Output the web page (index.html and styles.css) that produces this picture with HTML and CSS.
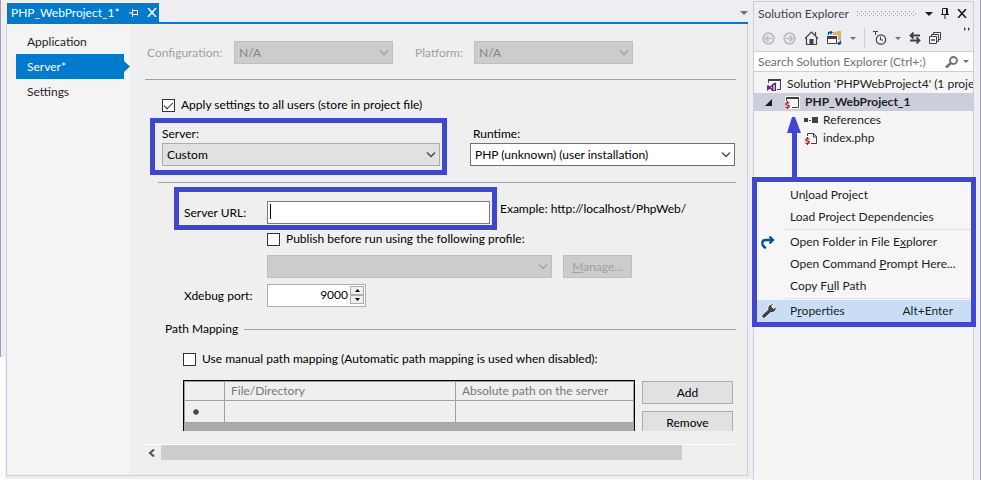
FILE: index.html
```html
<!DOCTYPE html>
<html lang="en">
<head>
<meta charset="utf-8">
<title>PHP_WebProject_1</title>
<link rel="stylesheet" href="styles.css">
</head>
<body>
<svg class="defs" aria-hidden="true">
  <symbol id="chevron" viewBox="0 0 10 6"><path d="M1 .5l4 4 4-4" fill="none" stroke="currentColor" stroke-width="1.300"/></symbol>
  <symbol id="caret" viewBox="0 0 8 4"><path d="M0 0h8L4 4z" fill="currentColor"/></symbol>
  <symbol id="dollar" viewBox="0 0 5 8"><path d="M4.500 2H1v1.800l3 .6V6.200H.3M2.500 0v2M2.500 6v2" fill="none" stroke="#a1000e" stroke-width="1.100"/></symbol>
</svg>
<div class="app">
  <div class="edge"></div>
  <main class="document">
    <header class="tabs">
      <div class="tab">
        <span class="tab-title">PHP_WebProject_1*</span>
        <button class="icon-button" aria-label="Pin tab"><svg width="9" height="8" viewBox="0 0 9 8"><path d="M0 4h3M3.500 0v8M4 1.500h4.500v5M4 5.500h5" fill="none" stroke="currentColor"/></svg></button>
        <button class="icon-button" aria-label="Close tab"><svg width="10" height="9" viewBox="0 0 10 9"><path d="M1 0l8 9M9 0L1 9" fill="none" stroke="currentColor" stroke-width="1.500"/></svg></button>
      </div>
      <button class="icon-button tab-list" aria-label="Open documents"><svg width="8" height="4"><use href="#caret"/></svg></button>
    </header>
    <div class="document-body">
      <nav class="pages">
        <a href="#application">Application</a>
        <a href="#server" class="current">Server*</a>
        <a href="#settings">Settings</a>
      </nav>
      <form class="settings">
        <div class="config-row">
          <label for="configuration">Configuration:</label>
          <span class="select"><select id="configuration" disabled><option>N/A</option></select><svg class="chevron"><use href="#chevron"/></svg></span>
          <label for="platform" class="platform-label">Platform:</label>
          <span class="select"><select id="platform" disabled><option>N/A</option></select><svg class="chevron"><use href="#chevron"/></svg></span>
        </div>
        <hr class="rule first-rule">
        <div class="check all-users"><input type="checkbox" id="all-users" checked><label for="all-users">Apply settings to all users (store in project file)</label></div>
        <div class="server-row">
          <div class="highlight server-field">
            <label for="server">Server:</label>
            <span class="select"><select id="server"><option>Custom</option></select><svg class="chevron"><use href="#chevron"/></svg></span>
          </div>
          <div class="runtime-field">
            <label for="runtime">Runtime:</label>
            <span class="select light"><select id="runtime"><option>PHP (unknown) (user installation)</option></select><svg class="chevron"><use href="#chevron"/></svg></span>
          </div>
        </div>
        <hr class="rule second-rule">
        <div class="url-row">
          <div class="highlight url-field">
            <label for="url">Server URL:</label>
            <span class="text-box"><input type="text" id="url"><span class="text-cursor"></span></span>
          </div>
          <span>Example: http://localhost/PhpWeb/</span>
        </div>
        <div class="check publish"><input type="checkbox" id="publish"><label for="publish">Publish before run using the following profile:</label></div>
        <div class="profile-row">
          <span class="select"><select id="profile" aria-label="Publish profile" disabled></select><svg class="chevron"><use href="#chevron"/></svg></span>
          <button type="button" class="button manage" disabled><u>M</u>anage...</button>
        </div>
        <div class="port-row">
          <label for="port">Xdebug port:</label>
          <span class="spinner">
            <input type="number" id="port" value="9000">
            <span class="steps">
              <button type="button" aria-label="Increase"><svg width="5" height="3" viewBox="0 0 5 3"><path d="M0 3h5L2.500 0z"/></svg></button>
              <button type="button" aria-label="Decrease"><svg width="5" height="3" viewBox="0 0 5 3"><path d="M0 0h5L2.500 3z"/></svg></button>
            </span>
          </span>
        </div>
        <h2 class="group-title">Path Mapping</h2>
        <div class="check manual"><input type="checkbox" id="manual"><label for="manual">Use manual path mapping (Automatic path mapping is used when disabled):</label></div>
        <div class="mapping">
          <div class="grid">
            <table>
              <thead><tr><th class="marker"></th><th>File/Directory</th><th class="server-path">Absolute path on the server</th></tr></thead>
              <tbody><tr><td class="marker"><svg width="6" height="6" viewBox="0 0 6 6"><path d="M3 0v6M0 3h6M1 1l4 4M5 1L1 5" stroke="#444" stroke-width="1.300"/></svg></td><td></td><td></td></tr></tbody>
            </table>
          </div>
          <div class="mapping-actions">
            <button type="button" class="button">Add</button>
            <button type="button" class="button">Remove</button>
          </div>
        </div>
        <div class="scrollbar">
          <button type="button" class="icon-button" aria-label="Scroll left"><svg width="7" height="8" viewBox="0 0 7 8"><path d="M6 .5L2 4l4 3.500" fill="none" stroke="#505050" stroke-width="2"/></svg></button>
          <div class="track"><div class="thumb"></div></div>
        </div>
      </form>
    </div>
  </main>
  <aside class="explorer">
    <header class="panel-title">
      <h1>Solution Explorer</h1>
      <svg class="grip" height="5"><defs><pattern id="dots" width="4" height="4" patternUnits="userSpaceOnUse"><path d="M0 0h1v1H0zM2 2h1v1H2z" fill="#999ba8"/></pattern></defs><rect width="100%" height="5" fill="url(#dots)"/></svg>
      <button class="icon-button" aria-label="Window position"><svg width="8" height="4"><use href="#caret"/></svg></button>
      <button class="icon-button" aria-label="Auto hide"><svg width="8" height="11" viewBox="0 0 8 11"><path d="M1.500 6V.5h5V6M5.500 1v5M0 6.500h8M4 7v4" fill="none" stroke="currentColor"/></svg></button>
      <button class="icon-button" aria-label="Close"><svg width="10" height="9" viewBox="0 0 10 9"><path d="M1 0l8 9M9 0L1 9" fill="none" stroke="currentColor" stroke-width="1.600"/></svg></button>
    </header>
    <div class="toolbar">
      <button class="icon-button faded" aria-label="Back"><svg width="13" height="13" viewBox="0 0 13 13"><circle cx="6.500" cy="6.500" r="5.300" fill="none" stroke="currentColor" stroke-width="1.800"/><path d="M10 6.500H4M6.500 3.500l-3 3 3 3" fill="none" stroke="currentColor" stroke-width="1.600"/></svg></button>
      <button class="icon-button faded" aria-label="Forward"><svg width="13" height="13" viewBox="0 0 13 13"><circle cx="6.500" cy="6.500" r="5.300" fill="none" stroke="currentColor" stroke-width="1.800"/><path d="M3 6.500h6M6.500 3.500l3 3-3 3" fill="none" stroke="currentColor" stroke-width="1.600"/></svg></button>
      <button class="icon-button" aria-label="Home"><svg width="15" height="14" viewBox="0 0 15 14"><path d="M1 7.500L7.500 1 14 7.500M2.500 7v6.500h10V7M11.500 1v4" fill="none" stroke="currentColor" stroke-width="1.200"/><path d="M5.500 8h4v5.500h-4z" fill="currentColor"/></svg></button>
      <button class="icon-button" aria-label="Sync views"><svg width="15" height="14" viewBox="0 0 15 14"><path d="M6 1h3l1-1h4v9h-3V4H6z" fill="#dcb067"/><path d="M.5 5.500h9v7h-9z" fill="#f6f6f6" stroke="#424242"/><path d="M0 5h10v3H0z" fill="#424242"/><path d="M1.500 4V1.500H5M3.500 0L5 1.500 3.500 3M13.500 9.500v3H11M12.500 11L11 12.500l1.500 1.500" fill="none" stroke="#00539c" stroke-width="1.300"/></svg></button>
      <button class="icon-button" aria-label="Sync options"><svg class="small-caret"><use href="#caret"/></svg></button>
      <span class="divider"></span>
      <button class="icon-button" aria-label="Pending changes filter"><svg width="14" height="14" viewBox="0 0 14 14"><path d="M0 .5h5M2.500 0v4" stroke="currentColor" fill="none"/><circle cx="8" cy="8.500" r="4.700" fill="none" stroke="currentColor" stroke-width="1.200"/><path d="M7.500 5.500V9H10" stroke="currentColor" fill="none"/></svg></button>
      <button class="icon-button" aria-label="Filter options"><svg class="small-caret"><use href="#caret"/></svg></button>
      <button class="icon-button" aria-label="Refresh"><svg width="12" height="12" viewBox="0 0 12 12"><path d="M11 3.500H2M4.500.5l-3 3 3 3M1 8.500h9M7.500 5.500l3 3-3 3" fill="none" stroke="currentColor" stroke-width="1.800"/></svg></button>
      <button class="icon-button" aria-label="Collapse all"><svg width="12" height="12" viewBox="0 0 12 12"><path d="M4.500 2V.5h7v7H10M2.500 4V2.500h7v7H8" fill="none" stroke="currentColor"/><path d="M.5 4.500h7v7h-7z" fill="#f6f6f6" stroke="currentColor"/><path d="M2 8h4" stroke="#00539c" stroke-width="1.500"/></svg></button>
      <button class="icon-button overflow" aria-label="More tools"><svg width="6" height="4" viewBox="0 0 6 4"><path d="M0 0l2 2-2 2zM4 0l2 2-2 2z" fill="currentColor"/></svg></button>
    </div>
    <div class="search">
      <input type="search" aria-label="Search Solution Explorer" placeholder="Search Solution Explorer (Ctrl+;)">
      <button class="icon-button" aria-label="Search"><svg width="13" height="12" viewBox="0 0 13 12"><circle cx="8.500" cy="4.500" r="3.500" fill="none" stroke="currentColor" stroke-width="1.800"/><path d="M6 7l-5 4.500" stroke="currentColor" stroke-width="2.500"/></svg></button>
      <button class="icon-button" aria-label="Search options"><svg class="small-caret"><use href="#caret"/></svg></button>
    </div>
    <ul class="tree">
      <li class="solution"><svg width="15" height="13" viewBox="0 0 15 13"><path d="M1.500 5V1.500h12v10H10" fill="none" stroke="#424242"/><path d="M1 1h13v2H1z" fill="#424242"/><path d="M.7 7.500v4l5-4.500v5.500l-5-5M5.700 6.500L8.300 5.500v8L5.700 12.500" fill="none" stroke="#68217a" stroke-width="1.400"/></svg>Solution 'PHPWebProject4' (1 project)</li>
      <li class="project"><svg class="expander" width="7" height="7" viewBox="0 0 7 7"><path d="M7 0v7H0z" fill="#1e1e1e"/></svg><svg width="15" height="13" viewBox="0 0 15 13"><path d="M0 0h15v13H0z" fill="#f6f6f6"/><path d="M1.500 5V1.500h12v10H7" fill="none" stroke="#424242"/><path d="M1 1h13v2H1z" fill="#424242"/><use href="#dollar" x="0" y="5" width="5" height="8"/></svg>PHP_WebProject_1</li>
      <li class="item"><svg width="14" height="13" viewBox="0 0 14 13"><path d="M0 4h4v4H0zM5 6h2v1H5zM8 3h6v6H8z" fill="#424242"/></svg>References</li>
      <li class="item"><svg width="14" height="13" viewBox="0 0 14 13"><path d="M3.500 4V1.500h6l3 3v7H7M9.500 1v4H13" fill="none" stroke="#424242"/><use href="#dollar" x="1" y="5" width="5" height="8"/></svg>index.php</li>
    </ul>
    <div class="callout">
      <svg class="pointer" width="14" height="62" viewBox="0 0 14 62"><path d="M5 62V17H0L5 1h3l6 16h-4v45z" fill="#3f48cc"/></svg>
      <div class="context-menu" role="menu">
        <button role="menuitem"><span class="menu-icon"></span>Un<u>l</u>oad Project</button>
        <button role="menuitem"><span class="menu-icon"></span>Load Project Dependencies</button>
        <hr>
        <button role="menuitem"><span class="menu-icon"><svg width="14" height="13" viewBox="0 0 14 13"><path d="M5 12C0 10 0 4 5 4h7M8.500 .5L12 4 8.500 7.500" fill="none" stroke="#00539c" stroke-width="2.300"/></svg></span>Open Folder in File E<u>x</u>plorer</button>
        <button role="menuitem"><span class="menu-icon"></span>Open Command <u>P</u>rompt Here...</button>
        <button role="menuitem"><span class="menu-icon"></span>Copy F<u>u</u>ll Path</button>
        <hr>
        <button role="menuitem" class="selected"><span class="menu-icon"><svg width="16" height="16" viewBox="0 0 16 16"><path d="M1 12l6-5.500C6 3 9 .3 12.800 1L10.500 3.500l2 2 2.700-2C16 7 13 10.500 9.500 9.500l-5.500 5.500c-2 1-4-1-3-3z" fill="#424242" stroke="#f6f6f6"/></svg></span>P<u>r</u>operties<kbd>Alt+Enter</kbd></button>
      </div>
    </div>
  </aside>
</div>
</body>
</html>
```
FILE: styles.css
```css
:root {
  --chrome: #eeeef2;
  --line: #cccedb;
  --accent: #007acc;
  --frame: #9b9fb9;
  --highlight: #3f48cc;
  --rule: #a0a0a0;
}

* { box-sizing: border-box; }

body {
  margin: 0;
  background: #fff;
  color: #000;
  font: 12px/18px Lato, "Open Sans", sans-serif;
}

button, input, select { font: inherit; color: inherit; margin: 0; border-radius: 0; }
ul { list-style: none; margin: 0; padding: 0; }
hr { border: 0; margin: 0; }
h1, h2 { margin: 0; font: inherit; }
a { color: inherit; text-decoration: none; }
svg { flex: none; display: block; }
.defs { position: absolute; width: 0; height: 0; }

.icon-button {
  flex: none;
  display: flex;
  padding: 0;
  border: 0;
  background: none;
}

.app { display: flex; min-height: 100vh; overflow: hidden; }

.edge {
  flex: none;
  width: 5px;
  height: 357px;
  border-left: 1px solid var(--frame);
  background: var(--chrome);
}

/* Document window */
.document {
  flex: 1;
  min-width: 0;
  display: flex;
  flex-direction: column;
  padding: 3px 5px 3px 1px;
  margin-bottom: 1px;
  background: var(--chrome);
}

.tabs {
  display: flex;
  align-items: center;
  justify-content: space-between;
  margin-left: 1px;
  border-bottom: 2px solid var(--accent);
}

.tab {
  display: flex;
  align-items: center;
  gap: 9px;
  width: 152px;
  height: 19px;
  padding: 0 5px 0 4px;
  background: var(--accent);
  color: #fff;
}
.tab-title { flex: 1; white-space: nowrap; }
.tab-list { color: #717171; }

.document-body {
  flex: 1;
  display: flex;
  border: 1px solid var(--line);
  border-top: 0;
  background: #efefef;
}

.pages {
  flex: none;
  width: 123px;
  padding: 5px 0 0 9px;
  background: #f4f4f4;
  color: #1e1e1e;
}
.pages a {
  display: block;
  height: 25px;
  padding-left: 11px;
  line-height: 25px;
}
.pages .current {
  background: var(--accent);
  color: #fff;
  clip-path: polygon(0 0, 108px 0, 108px 7px, 100% 50%, 108px 18px, 108px 100%, 0 100%);
}

/* Settings form */
.settings { flex: 1; min-width: 0; padding: 17px 11px 0 15px; }

.select { position: relative; display: block; }
.select select {
  display: block;
  width: 100%;
  height: 23px;
  padding: 0 4px;
  border: 1px solid #adadad;
  background: #e1e1e1;
  appearance: none;
}
.select select:disabled { background: #ccc; border-color: #bfbfbf; color: #838383; opacity: 1; }
.select.light select { background: #fff; border-color: #707070; }
.chevron {
  position: absolute;
  right: 4px;
  top: 9px;
  width: 10px;
  height: 6px;
  color: #444;
  pointer-events: none;
}
select:disabled + .chevron { color: #a0a0a0; }

.config-row {
  display: flex;
  align-items: center;
  padding-left: 2px;
  color: #a0a0a0;
}
.config-row label { width: 87px; }
.config-row .platform-label { width: 59px; margin-left: 22px; }
.config-row .select { width: 159px; }

.rule { height: 1px; background: var(--rule); }
.first-rule { margin-top: 15px; }
.second-rule { margin: 7px 0 0 13px; }

.check { display: flex; align-items: center; gap: 6px; height: 18px; white-space: nowrap; }
.check input {
  flex: none;
  width: 13px;
  height: 13px;
  border: 1px solid #333;
  background: #fff;
  appearance: none;
}
.check input:checked::before {
  content: "";
  display: block;
  width: 8px;
  height: 4px;
  margin: 2px 1px;
  border: solid #333;
  border-width: 0 0 1px 1px;
  transform: rotate(-45deg);
}
.all-users { margin: 16px 0 0 17px; }
.publish { margin-left: 122px; }
.manual { margin: 12px 0 0 38px; }

.highlight { border: 5px solid var(--highlight); }

.server-row {
  display: grid;
  grid-template-columns: 297fr 265fr;
  gap: 23px;
  margin: 4px 1px 0 5px;
}
.server-row label { display: block; }
.server-field { padding: 2px 2px 4px 7px; }
.runtime-field { padding-top: 7px; }
.runtime-field label { padding-left: 3px; }

.url-row { display: flex; align-items: center; gap: 3px; margin: 4px 0 0 29px; white-space: nowrap; }
.url-field { display: flex; align-items: center; width: 323px; padding: 9px 2px 1px 5px; }
.url-field label { flex: none; width: 83px; }
.text-box { position: relative; flex: 1; }
.text-box input {
  display: block;
  width: 100%;
  height: 23px;
  border: 1px solid #7a7a7a;
  background: #fff;
}
.text-cursor { position: absolute; left: 3px; top: 3px; width: 1px; height: 15px; background: #000; }

.button {
  height: 23px;
  padding: 0;
  border: 1px solid #adadad;
  background: #e1e1e1;
}
.button:disabled { border-color: #bfbfbf; background: #ccc; color: #a0a0a0; }

.profile-row { display: flex; gap: 11px; margin: 7px 0 0 122px; }
.profile-row .select { width: 285px; }
.manage { width: 69px; }

.port-row { display: flex; align-items: center; margin: 6px 0 0 39px; }
.port-row label { width: 83px; }
.spinner {
  display: flex;
  align-items: flex-start;
  width: 99px;
  height: 23px;
  padding: 1px;
  border: 1px solid #adadad;
  background: #fff;
}
.spinner input {
  flex: 1;
  min-width: 0;
  height: 17px;
  padding: 0 2px;
  border: 0;
  background: none;
  text-align: right;
  appearance: textfield;
}
.spinner input::-webkit-inner-spin-button { appearance: none; margin: 0; }
.steps button {
  display: flex;
  align-items: center;
  justify-content: center;
  width: 14px;
  height: 9px;
  padding: 0;
  border: 1px solid #adadad;
  background: #f0f0f0;
}

.group-title { display: flex; align-items: center; gap: 6px; margin: 13px 0 0 20px; }
.group-title::after { content: ""; flex: 1; height: 1px; background: var(--rule); }

.mapping { display: flex; gap: 7px; height: 51px; margin: 12px 3px 0 38px; overflow: hidden; }
.grid { flex: 1; height: 80px; border: 1px solid #000; background: #ababab; }
.grid table { width: 100%; border-collapse: collapse; table-layout: fixed; background: #efefef; }
.grid th, .grid td { border: 1px solid var(--rule); padding: 0 6px; }
.grid th { height: 19px; font-weight: normal; text-align: left; color: #777; }
.grid td { height: 22px; }
.grid .marker { width: 40px; padding-left: 8px; }
.server-path { width: 178px; }
.mapping-actions { display: grid; grid-auto-rows: 23px; gap: 7px; width: 91px; padding-top: 1px; }

.scrollbar { display: flex; margin: 13px 2px 0 0; border-top: 1px solid #fff; }
.scrollbar .icon-button { width: 16px; align-items: center; padding-left: 3px; }
.track { flex: 1; height: 15px; }
.thumb { width: 91%; height: 15px; background: #cdcdcd; }

/* Solution Explorer */
.explorer {
  position: relative;
  flex: none;
  width: 228px;
  padding: 1px 6px 0 0;
  border-right: 1px solid var(--frame);
  background: var(--chrome);
  display: flex;
  flex-direction: column;
  color: #1e1e1e;
}
.explorer > :not(.callout) { border: 0 solid var(--line); border-width: 0 1px; }

.explorer .panel-title {
  display: flex;
  align-items: center;
  gap: 8px;
  height: 24px;
  padding: 0 6px 0 4px;
  border-top-width: 1px;
  white-space: nowrap;
}
.panel-title h1 { color: #444; }
.grip { flex: 1; min-width: 0; }

.toolbar {
  display: flex;
  align-items: center;
  gap: 8px;
  height: 26px;
  padding: 0 3px 0 8px;
  color: #424242;
}
.faded { color: #bcbcbf; }
.small-caret { width: 6px; height: 3px; color: #717171; }
.divider { width: 1px; height: 20px; background: var(--line); }
.overflow { align-self: flex-start; margin: 2px 0 0 auto; }

.explorer .search {
  display: flex;
  align-items: center;
  gap: 5px;
  height: 21px;
  padding-right: 4px;
  border-width: 1px;
  background: #fff;
  color: #717171;
}
.search input {
  flex: 1;
  min-width: 0;
  height: 18px;
  padding: 0 0 0 4px;
  border: 0;
  background: none;
  appearance: none;
}
.search input::-webkit-search-cancel-button { display: none; }
.search input::placeholder { color: #717171; }

.tree { flex: 1; padding-top: 3px; background: #f5f5f5; }
.tree li {
  display: flex;
  align-items: center;
  gap: 5px;
  height: 18px;
  overflow: hidden;
  white-space: nowrap;
}
.tree .solution { padding-left: 13px; }
.tree .project { padding-left: 11px; background: var(--line); font-weight: bold; }
.tree .expander { margin-right: 8px; }
.tree .item { padding-left: 50px; }

/* Context menu and its pointer lie over the tree */
.callout { position: absolute; top: 116px; left: -1px; right: 4px; }
.pointer { margin-left: 35px; }
.context-menu {
  margin-top: -1px;
  padding-top: 2px;
  border: 5px solid var(--highlight);
  background: #f6f6f6;
}
.context-menu button {
  display: flex;
  align-items: center;
  width: 100%;
  height: 22px;
  padding: 0 18px 0 4px;
  border: 0;
  background: none;
  text-align: left;
  white-space: pre;
}
.menu-icon { flex: none; width: 29px; }
.context-menu hr { height: 1px; margin: 1px 0 1px 29px; background: #dcdfe6; }
.context-menu .selected { background: #c9def5; }
.context-menu kbd { margin-left: auto; font: inherit; }
```
